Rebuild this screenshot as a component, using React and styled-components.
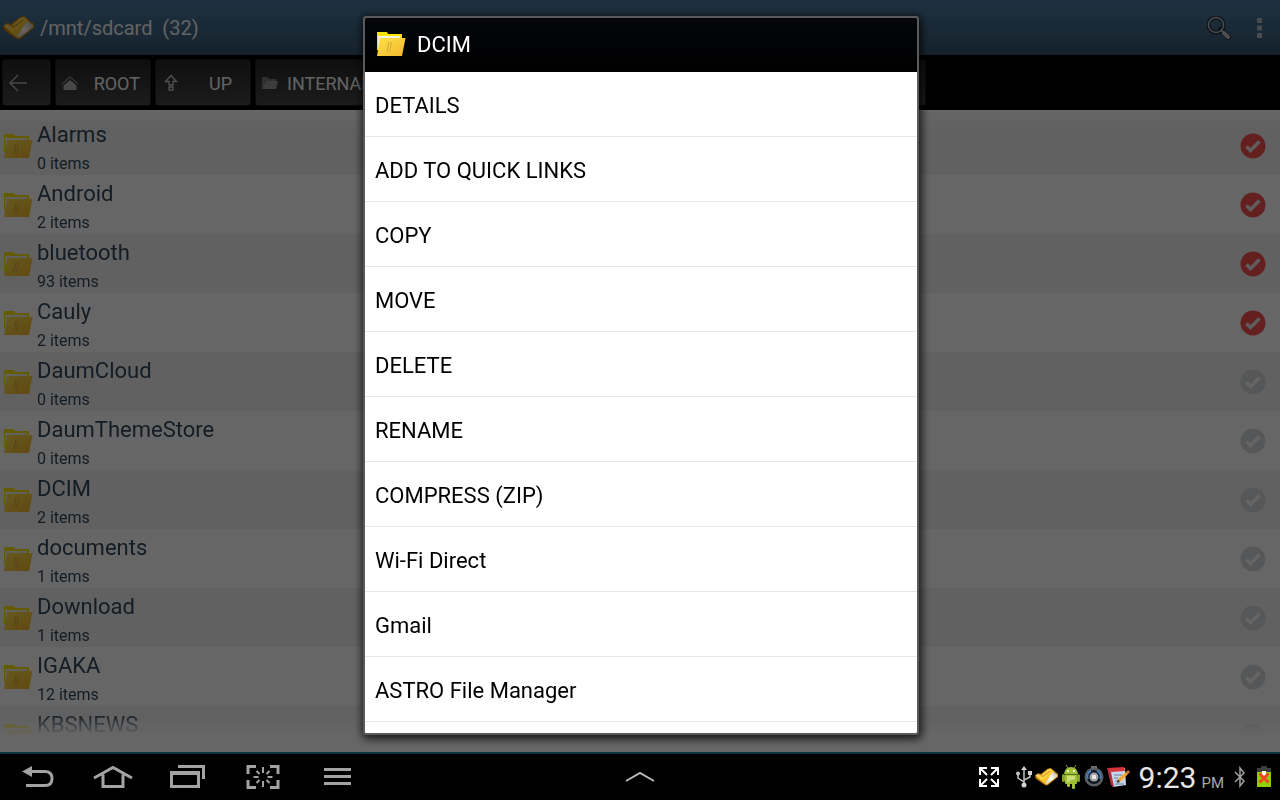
import React from 'react';
import styled, { createGlobalStyle } from 'styled-components';

const fontStack = 'Roboto, "Noto Sans", sans-serif';
const listText = '#34495c';
const navIcon = '#a3a3a3';

const GlobalStyle = createGlobalStyle`
  * {
    box-sizing: border-box;
  }
  body {
    background: #000;
    font-family: ${fontStack};
    margin: 0;
  }
  button {
    background: none;
    border: 0;
    color: inherit;
    font-family: inherit;
    padding: 0;
  }
  svg {
    display: block;
    flex: none;
  }
`;

const Page = styled.div`
  display: flex;
  flex-direction: column;
  height: 100vh;
  overflow: hidden;
`;

const Screen = styled.main`
  background: #fff;
  display: flex;
  flex: 1;
  flex-direction: column;
  min-height: 0;
  position: relative;
`;

const AppBar = styled.header`
  align-items: center;
  background: linear-gradient(#4c7aa2, #36566f);
  color: #fff;
  display: flex;
  flex: none;
  gap: 6px;
  height: 55px;
  padding: 0 15px 0 3px;
`;

const Path = styled.h1`
  color: #f5f5f5;
  flex: 1;
  font-size: 20px;
  font-weight: 400;
  margin: 0;
  white-space: pre;
`;

const BarActions = styled.div`
  align-items: center;
  display: flex;
  gap: 24px;
`;

const Toolbar = styled.nav`
  background: #000;
  display: flex;
  flex: none;
  gap: 4px;
  height: 55px;
  padding: 4px 2px;
`;

const ToolButton = styled.button`
  align-items: center;
  background: linear-gradient(#262626, #464646);
  border: 1px solid #1c1c1c;
  border-radius: 3px;
  color: #f5f5f5;
  display: flex;
  font-size: 18px;
  gap: 8px;
  padding: 0 ${({ $padRight }) => $padRight || 10}px 0 5px;
  width: ${({ $width }) => $width || 96}px;
`;

const ToolText = styled.span`
  flex: 1;
  padding-top: 2px;
  text-align: ${({ $align }) => $align || 'right'};
`;

const FileList = styled.ul`
  background: linear-gradient(#fff, #f2f2f2 16px, transparent 16px);
  flex: 1;
  list-style: none;
  margin: 0 0 16px;
  mask-image: linear-gradient(#000 calc(100% - 22px), transparent);
  min-height: 0;
  overflow: hidden;
  padding: 6px 0 0;
`;

const FileRow = styled.li`
  align-items: center;
  background: ${({ $first }) =>
    $first ? 'linear-gradient(#fbfbfb, #f2f2f2 14px)' : 'transparent'};
  display: flex;
  gap: 4px;
  height: 59px;
  padding: 0 14px 0 3px;
  &:nth-child(odd):not(:first-child) {
    background: #f2f2f2;
  }
`;

const FileInfo = styled.div`
  color: ${listText};
  flex: 1;
`;

const FileName = styled.div`
  font-size: 22px;
  line-height: 37px;
`;

const FileCount = styled.div`
  font-size: 16px;
  line-height: 22px;
  min-height: 22px;
`;

const CheckLabel = styled.label`
  display: block;
  & input {
    appearance: none;
    display: block;
    height: 0;
    margin: 0;
    width: 0;
  }
`;

const Backdrop = styled.div`
  align-items: stretch;
  background: rgba(0, 0, 0, 0.6);
  display: flex;
  inset: 0;
  justify-content: center;
  padding: 16px 16px 17px 18px;
  position: absolute;
`;

const Dialog = styled.section`
  background: #fff;
  border: 2px solid #5a5a5a;
  border-radius: 3px;
  box-shadow: 1px 2px 9px 2px rgba(0, 0, 0, 0.75);
  display: flex;
  flex-direction: column;
  max-width: 556px;
  overflow: hidden;
  width: 100%;
`;

const DialogTitle = styled.h2`
  align-items: center;
  background: linear-gradient(#040609, #000);
  color: #fff;
  display: flex;
  flex: none;
  font-size: 22px;
  font-weight: 400;
  gap: 11px;
  height: 54px;
  margin: 0;
  padding: 0 11px 2px;
`;

const MenuList = styled.ul`
  flex: 1;
  list-style: none;
  margin: 0;
  overflow: hidden;
  padding: 0;
`;

const MenuButton = styled.button`
  border-bottom: 1px solid #e6e6e6;
  color: #000;
  display: block;
  font-size: 22px;
  height: 65px;
  padding: 2px 10px 0;
  text-align: left;
  width: 100%;
`;

const SystemBar = styled.footer`
  background: #000;
  border-top: 2px solid #0e3442;
  display: grid;
  flex: none;
  grid-template-columns: 1fr auto 1fr;
  height: 48px;
`;

const NavGroup = styled.div`
  align-items: stretch;
  display: flex;
`;

const NavButton = styled.button`
  align-items: center;
  color: ${navIcon};
  display: flex;
  justify-content: center;
  width: 75px;
`;

const Status = styled.div`
  align-items: center;
  color: #e6e6e6;
  display: flex;
  justify-content: flex-end;
  padding-right: 8px;
`;

const StatusIcons = styled.div`
  align-items: center;
  display: flex;
  gap: 3px;
  margin: 0 9px 0 17px;
`;

const Clock = styled.time`
  align-items: baseline;
  display: flex;
  font-size: 30px;
  gap: 5px;
  margin-right: 9px;
`;

const Meridiem = styled.span`
  color: #a8a8a8;
  font-size: 15px;
`;

const StatusPair = styled.div`
  align-items: center;
  display: flex;
  gap: 9px;
`;

const FolderIcon = () => (
  <svg width="30" height="26" viewBox="0 0 30 26" aria-hidden="true">
    <defs>
      <linearGradient id="folderFront" x1="0" y1="0" x2="1" y2="1">
        <stop offset="0" stopColor="#ffe14a" />
        <stop offset="1" stopColor="#f3b62c" />
      </linearGradient>
    </defs>
    <path d="M1 1h10l1 2h14v16H1z" fill="#fbe400" />
    <path d="M2 5h22v6H2z" fill="#fffbe6" />
    <path d="M2 6v13L5 8h19V5z" fill="#eaf1df" />
    <path d="M4 7h25.500L26 25H1z" fill="url(#folderFront)" />
    <path d="M13 11l-2 10M15.500 11l-2 10" stroke="#c4a23c" strokeWidth="0.800" />
  </svg>
);

const AstroIcon = ({ width = 31, height = 24 }) => (
  <svg width={width} height={height} viewBox="0 0 31 24" aria-hidden="true">
    <defs>
      <linearGradient id="astroFlap" x1="0" y1="0" x2="1" y2="1">
        <stop offset="0" stopColor="#f6dc94" />
        <stop offset="0.500" stopColor="#ffcf3a" />
        <stop offset="1" stopColor="#dd9a10" />
      </linearGradient>
      <linearGradient id="astroPaper" x1="0" y1="1" x2="1" y2="0">
        <stop offset="0" stopColor="#d8d0c0" />
        <stop offset="0.500" stopColor="#fbf8ee" />
        <stop offset="1" stopColor="#b8b2a8" />
      </linearGradient>
    </defs>
    <path d="M0 10l4-3 4 1 9-7 4-1 10 8v4L17 23h-3L1 14z" fill="#c98408" />
    <path d="M1 10l3-2 4 2 9-8 4-1 5 4-12 17z" fill="url(#astroFlap)" />
    <path d="M8 10l3 1 9-7" fill="none" stroke="#b87c10" strokeWidth="1" />
    <path d="M24 5l6 4v2L16 22l-2-2z" fill="url(#astroPaper)" />
  </svg>
);

const SearchIcon = () => (
  <svg width="24" height="24" viewBox="0 0 24 24" fill="none" aria-hidden="true">
    <circle cx="9" cy="9" r="7.500" stroke="#22303c" strokeWidth="4" />
    <path d="M14 14l7 7" stroke="#22303c" strokeWidth="6" strokeLinecap="round" />
    <circle cx="9" cy="9" r="7.500" stroke="#b9bdc2" strokeWidth="1.500" />
    <path d="M14 14l3 3" stroke="#b9bdc2" strokeWidth="2" />
    <path d="M17 17l4 4" stroke="#b9bdc2" strokeWidth="4" strokeLinecap="round" />
  </svg>
);

const OverflowIcon = () => (
  <svg width="10" height="22" viewBox="0 0 10 22" fill="#b4bac0" aria-hidden="true">
    <path d="M2 1h5v5H2zM2 8.500h5v5H2zM2 16h5v5H2z" />
  </svg>
);

const ArrowLeftIcon = () => (
  <svg width="20" height="20" viewBox="0 0 20 20" fill="none" stroke="#b0b0b0" strokeWidth="1.500" aria-hidden="true">
    <path d="M19 10H3M10 2l-8 8 8 8" />
  </svg>
);

const RootIcon = () => (
  <svg width="18" height="18" viewBox="0 0 18 18" aria-hidden="true">
    <path d="M1 10l8-7 8 7" fill="none" stroke="#8c8c8c" strokeWidth="1.200" />
    <path d="M2.500 11.500L9 6l6.500 5.500V16h-13z" fill="#b4b4b4" />
  </svg>
);

const UpIcon = () => (
  <svg width="20" height="18" viewBox="0 0 20 18" fill="none" stroke="#c8c8c8" strokeWidth="1.300" aria-hidden="true">
    <path d="M10 1.500l5.500 6H12v3.500H8V7.500H4.500zM8 13h4v3H8z" />
  </svg>
);

const SmallFolderIcon = () => (
  <svg width="18" height="14" viewBox="0 0 18 14" aria-hidden="true">
    <path d="M1 13V1h6l1 2h7v2H5z" fill="#777" />
    <path d="M5 5h12l-2 8H1z" fill="#999" />
  </svg>
);

const CheckIcon = ({ checked }) => (
  <svg width="26" height="26" viewBox="0 0 26 26" aria-hidden="true">
    <circle cx="13" cy="13" r="12.500" fill={checked ? '#fb4f4f' : '#d6dade'} />
    <path d="M6.500 13.500l4 4 9-9" fill="none" stroke={checked ? '#eaeaea' : '#fcfcfc'} strokeWidth="3.500" />
  </svg>
);

const BackIcon = () => (
  <svg width="32" height="24" viewBox="0 0 32 24" aria-hidden="true">
    <path d="M0 6.500L10 1v11z" fill="currentColor" />
    <path d="M9 6.500h14q7 0 7 7t-7 7H4" fill="none" stroke="currentColor" strokeWidth="3" />
  </svg>
);

const HomeIcon = () => (
  <svg width="40" height="24" viewBox="0 0 40 24" fill="none" stroke="currentColor" strokeWidth="3" aria-hidden="true">
    <path d="M1 13L20 2.500 39 13M10 9.500v12h20v-12" />
  </svg>
);

const RecentIcon = () => (
  <svg width="36" height="24" viewBox="0 0 36 24" aria-hidden="true">
    <path d="M8 0h27v14h-3V3H8z" fill="currentColor" />
    <path d="M0 6h30v17H0zM3 10v10h24V10z" fill="currentColor" fillRule="evenodd" />
  </svg>
);

const CaptureIcon = () => (
  <svg width="34" height="24" viewBox="0 0 34 24" fill="none" stroke="currentColor" strokeWidth="3" aria-hidden="true">
    <path d="M2 9V1.500h8M24 1.500h8V9M32 15v7.500h-8M10 22.500H2V15" />
    <path d="M17 2v6M17 16v6M7.500 12h5M21.500 12h5M10.500 6l3 3M23.500 6l-3 3M10.500 18l3-3M23.500 18l-3-3" strokeWidth="2" />
  </svg>
);

const MenuIcon = () => (
  <svg width="27" height="18" viewBox="0 0 27 18" fill="currentColor" aria-hidden="true">
    <path d="M0 0h27v3H0zM0 7h27v3H0zM0 14h27v3H0z" />
  </svg>
);

const ChevronIcon = () => (
  <svg width="30" height="12" viewBox="0 0 30 12" fill="none" stroke="#b8b8b8" strokeWidth="2" aria-hidden="true">
    <path d="M1 10l14-8 14 8" />
  </svg>
);

const ExpandIcon = () => (
  <svg width="20" height="20" viewBox="0 0 20 20" fill="none" stroke="#fff" strokeWidth="2" aria-hidden="true">
    <path d="M1 8V1h7M12 1h7v7M19 12v7h-7M8 19H1v-7M1 1l7 7M19 1l-7 7M19 19l-7-7M1 19l7-7" />
  </svg>
);

const UsbIcon = () => (
  <svg width="16" height="24" viewBox="0 0 16 24" aria-hidden="true">
    <path d="M8 4v16M2 9v4l6 4M14 8v4l-6 3" fill="none" stroke="#c4c4c4" strokeWidth="1.500" />
    <path d="M8 1l3 4H5zM12 6h4v4h-4z" fill="#d0d0d0" />
    <circle cx="2" cy="8.500" r="2" fill="#c4c4c4" />
    <circle cx="8" cy="20" r="2.500" fill="#d0d0d0" />
  </svg>
);

const AndroidIcon = () => (
  <svg width="20" height="24" viewBox="0 0 20 24" aria-hidden="true">
    <g fill="#9fc037">
      <path d="M3 9q1-7 7-7t7 7zM4 10h12v8q0 1-1 1H5q-1 0-1-1z" />
      <path d="M5 0l2 3M15 0l-2 3" stroke="#7f9c28" />
      <rect x="1" y="9" width="3" height="8" rx="1.500" fill="#86a42a" />
      <rect x="16" y="9" width="3" height="8" rx="1.500" fill="#86a42a" />
      <rect x="6" y="18" width="3" height="4" rx="1.200" />
      <rect x="11" y="18" width="3" height="6" rx="1.200" />
    </g>
    <path d="M4 9.500h12" stroke="#5c7318" />
    <path d="M6 11q3-1 8 0v3q-5 1-8 4z" fill="#c9de76" />
    <circle cx="7" cy="6" r="1" fill="#fff" />
    <circle cx="13" cy="6" r="1" fill="#fff" />
  </svg>
);

const CameraIcon = () => (
  <svg width="20" height="22" viewBox="0 0 20 22" aria-hidden="true">
    <path d="M7 0h6v4H7z" fill="#6b7076" />
    <circle cx="10" cy="11" r="9.500" fill="#5a5f66" />
    <circle cx="10" cy="11" r="7" fill="#11151c" />
    <path d="M4 13a6.500 6.500 0 0 1 3-8M13 5a6.500 6.500 0 0 1 3 8" fill="none" stroke="#3f86dc" strokeWidth="1.500" />
    <circle cx="10" cy="11" r="4.500" fill="#9fa3a8" />
    <path d="M8 9h4v4H8z" fill="#e8e8e8" />
  </svg>
);

const NoteIcon = () => (
  <svg width="23" height="20" viewBox="0 0 23 20" aria-hidden="true">
    <path d="M2 2l16-1 1 17-13 2z" fill="#c9d6ea" />
    <path d="M0 1l17-1 1 4-14 1z" fill="#d8323b" />
    <path d="M0 1l4 4 3 15-3-2z" fill="#b8303c" />
    <path d="M7 8h8M7 11h4M8 14h3M8 17h9" stroke="#6b7fa3" />
    <path d="M11 12l8-7 2 2-8 8z" fill="#f5a72a" />
    <path d="M19 5l2-2 2 2-2 2z" fill="#e0763a" />
    <path d="M11 12l-1 4 3-1z" fill="#432" />
  </svg>
);

const BluetoothIcon = () => (
  <svg width="14" height="22" viewBox="0 0 14 22" fill="none" stroke="#a0a0a0" strokeWidth="1.500" aria-hidden="true">
    <path d="M2 6l9 9-4 5V2l4 5-9 9" />
  </svg>
);

const BatteryIcon = () => (
  <svg width="16" height="22" viewBox="0 0 16 22" aria-hidden="true">
    <path d="M5 0h6v2h4v5H1V2h4z" fill="#3c3c3c" />
    <path d="M1 6h14v15H1z" fill="#8fce00" />
    <path d="M6 5h4v5H6z" fill="#fff" />
    <path d="M3.500 7.500l9 9M12.500 7.500l-9 9" stroke="#f4471f" strokeWidth="3" />
  </svg>
);

const files = [
  { name: 'Alarms', count: '0 items', checked: true },
  { name: 'Android', count: '2 items', checked: true },
  { name: 'bluetooth', count: '93 items', checked: true },
  { name: 'Cauly', count: '2 items', checked: true },
  { name: 'DaumCloud', count: '0 items' },
  { name: 'DaumThemeStore', count: '0 items' },
  { name: 'DCIM', count: '2 items' },
  { name: 'documents', count: '1 items' },
  { name: 'Download', count: '1 items' },
  { name: 'IGAKA', count: '12 items' },
  { name: 'KBSNEWS', count: '' },
];

const actions = [
  'DETAILS',
  'ADD TO QUICK LINKS',
  'COPY',
  'MOVE',
  'DELETE',
  'RENAME',
  'COMPRESS (ZIP)',
  'Wi-Fi Direct',
  'Gmail',
  'ASTRO File Manager',
];

const App = () => (
  <Page>
    <GlobalStyle />
    <Screen>
      <AppBar>
        <AstroIcon />
        <Path>{'/mnt/sdcard  (32)'}</Path>
        <BarActions>
          <button type="button" aria-label="Search">
            <SearchIcon />
          </button>
          <button type="button" aria-label="More options">
            <OverflowIcon />
          </button>
        </BarActions>
      </AppBar>
      <Toolbar>
        <ToolButton $width={49} aria-label="Back">
          <ArrowLeftIcon />
        </ToolButton>
        <ToolButton>
          <RootIcon />
          <ToolText>ROOT</ToolText>
        </ToolButton>
        <ToolButton $padRight={18}>
          <UpIcon />
          <ToolText>UP</ToolText>
        </ToolButton>
        <ToolButton $width={203}>
          <SmallFolderIcon />
          <ToolText $align="left">INTERNAL</ToolText>
        </ToolButton>
        <ToolButton $width={464} aria-label="Quick links" />
      </Toolbar>
      <FileList>
        {files.map(({ name, count, checked }, index) => (
          <FileRow key={name} $first={index === 0}>
            <FolderIcon />
            <FileInfo>
              <FileName>{name}</FileName>
              <FileCount>{count}</FileCount>
            </FileInfo>
            <CheckLabel>
              <input type="checkbox" defaultChecked={checked} aria-label={name} />
              <CheckIcon checked={checked} />
            </CheckLabel>
          </FileRow>
        ))}
      </FileList>
      <Backdrop>
        <Dialog role="dialog" aria-labelledby="dialog-title">
          <DialogTitle id="dialog-title">
            <FolderIcon />
            DCIM
          </DialogTitle>
          <MenuList>
            {actions.map((action) => (
              <li key={action}>
                <MenuButton type="button">{action}</MenuButton>
              </li>
            ))}
          </MenuList>
        </Dialog>
      </Backdrop>
    </Screen>
    <SystemBar>
      <NavGroup>
        <NavButton aria-label="Back">
          <BackIcon />
        </NavButton>
        <NavButton aria-label="Home">
          <HomeIcon />
        </NavButton>
        <NavButton aria-label="Recent apps">
          <RecentIcon />
        </NavButton>
        <NavButton aria-label="Screen capture">
          <CaptureIcon />
        </NavButton>
        <NavButton aria-label="Menu">
          <MenuIcon />
        </NavButton>
      </NavGroup>
      <NavButton aria-label="Open tray">
        <ChevronIcon />
      </NavButton>
      <Status>
        <ExpandIcon />
        <StatusIcons>
          <UsbIcon />
          <AstroIcon width={23} height={18} />
          <AndroidIcon />
          <CameraIcon />
          <NoteIcon />
        </StatusIcons>
        <Clock>
          9:23
          <Meridiem>PM</Meridiem>
        </Clock>
        <StatusPair>
          <BluetoothIcon />
          <BatteryIcon />
        </StatusPair>
      </Status>
    </SystemBar>
  </Page>
);

export default App;
